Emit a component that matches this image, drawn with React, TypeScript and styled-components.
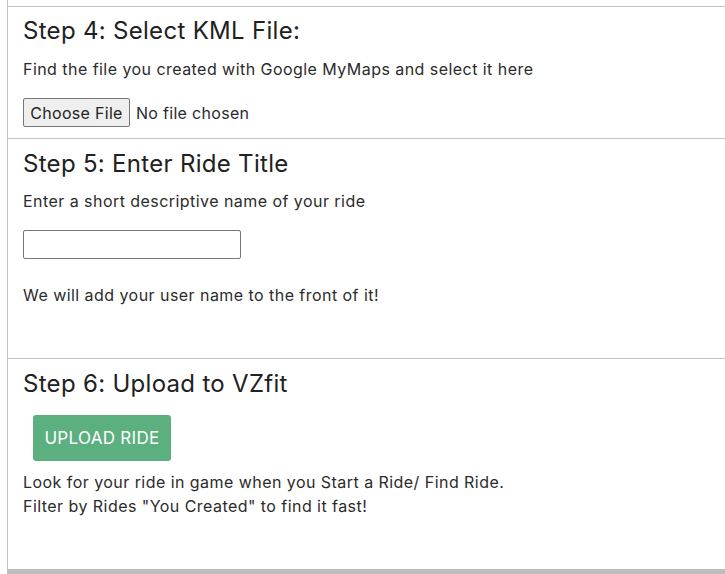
import React from "react";
import styled, { createGlobalStyle } from "styled-components";

const GlobalStyle = createGlobalStyle`
  html, body { margin: 0; padding: 0; background: #ffffff; }
  body {
    font-family: Inter, "Open Sans", sans-serif;
    color: #212529;
    -webkit-font-smoothing: antialiased;
  }
  * { box-sizing: border-box; }
`;

const Page = styled.div`
  margin-left: 7px;
  border-left: 1px solid #c2c2c2;
  padding-top: 6px;
  height: 574px;
  overflow: hidden;
  display: flex;
  flex-direction: column;
`;

const Section = styled.section<{ $top: number; $bottom: number }>`
  border-top: 1px solid #c2c2c2;
  padding: ${(p) => p.$top}px 15px ${(p) => p.$bottom}px 15px;
  display: flex;
  flex-direction: column;
  align-items: flex-start;
`;

const Heading = styled.h3`
  margin: 0;
  font-size: 24px;
  line-height: 29px;
  font-weight: 400;
  letter-spacing: 0.3px;
  color: #212121;
`;

const Text = styled.p<{ $top: number }>`
  margin: ${(p) => p.$top}px 0 0 0;
  font-size: 16px;
  line-height: 24px;
  letter-spacing: 0.45px;
  color: #2b2b2b;
`;

const FileRow = styled.div`
  margin-top: 17px;
  display: flex;
  align-items: center;
  gap: 6px;
  font-size: 16px;
  letter-spacing: 0.3px;
`;

const FileButton = styled.button`
  width: 107px;
  height: 29px;
  padding: 0;
  font: inherit;
  font-size: 16px;
  letter-spacing: 0.3px;
  color: #222;
  background: #efefef;
  border: 1px solid #767676;
  border-radius: 2px;
`;

const FileStatus = styled.span`
  color: #2b2b2b;
`;

const TitleInput = styled.input`
  margin-top: 17px;
  width: 218px;
  height: 29px;
  border: 1px solid #767676;
  border-radius: 2px;
  padding: 0 4px;
  font: inherit;
`;

const UploadButton = styled.button`
  margin: 17px 0 0 10px;
  width: 138px;
  height: 46px;
  padding: 0;
  background: #5cb080;
  color: #ffffff;
  border: none;
  border-radius: 3px;
  font: inherit;
  font-size: 17px;
  letter-spacing: 0.3px;
`;

const Lines = styled.div`
  margin-top: 9px;
  font-size: 16px;
  line-height: 24px;
  letter-spacing: 0.45px;
  color: #2b2b2b;
`;

const Footer = styled.div`
  flex: 1;
  background: #bdbdbd;
`;

export default function App() {
  return (
    <>
      <GlobalStyle />
      <Page>
        <Section $top={9} $bottom={11}>
          <Heading>Step 4: Select KML File:</Heading>
          <Text $top={12}>Find the file you created with Google MyMaps and select it here</Text>
          <FileRow>
            <FileButton type="button">Choose File</FileButton>
            <FileStatus>No file chosen</FileStatus>
          </FileRow>
        </Section>
        <Section $top={10} $bottom={51}>
          <Heading>Step 5: Enter Ride Title</Heading>
          <Text $top={11}>Enter a short descriptive name of your ride</Text>
          <TitleInput type="text" />
          <Text $top={24}>We will add your user name to the front of it!</Text>
        </Section>
        <Section $top={10} $bottom={51}>
          <Heading>Step 6: Upload to VZfit</Heading>
          <UploadButton type="button">UPLOAD RIDE</UploadButton>
          <Lines>
            Look for your ride in game when you Start a Ride/ Find Ride.
            <br />
            Filter by Rides "You Created" to find it fast!
          </Lines>
        </Section>
        <Footer />
      </Page>
    </>
  );
}
